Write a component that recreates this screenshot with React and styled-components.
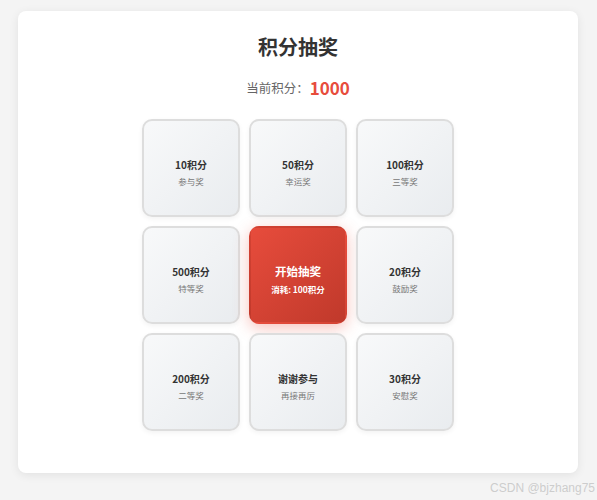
import React from "react";
import styled, { createGlobalStyle } from "styled-components";

const GlobalStyle = createGlobalStyle`
  html, body {
    margin: 0;
    padding: 0;
    background: #f4f4f4;
    font-family: "Noto Sans CJK SC", "Noto Sans", sans-serif;
  }
`;

const Page = styled.div`
  position: relative;
  height: 500px;
  padding: 11px 19px 0 18px;
  box-sizing: border-box;
`;

const Card = styled.div`
  background: #fff;
  border-radius: 8px;
  box-shadow: 0 2px 10px rgba(0, 0, 0, 0.08);
  padding: 22px 0 42px;
  display: flex;
  flex-direction: column;
  align-items: center;
`;

const Title = styled.h2`
  margin: 0;
  font-size: 20px;
  line-height: 28px;
  font-weight: 700;
  color: #333;
`;

const Points = styled.div`
  margin-top: 14px;
  height: 24px;
  display: flex;
  align-items: center;
  font-size: 12.5px;
  color: #666;
`;

const PointsValue = styled.span`
  font-size: 17px;
  font-weight: 700;
  color: #e74c3c;
  margin-left: 1px;
`;

const Grid = styled.div`
  margin-top: 20px;
  display: grid;
  grid-template-columns: repeat(3, 98px);
  grid-auto-rows: 98px;
  gap: 9px;
`;

const Cell = styled.div`
  box-sizing: border-box;
  border-radius: 10px;
  border: 2px solid ${(p) => (p.$start ? "transparent" : "#dddddd")};
  background: ${(p) =>
    p.$start
      ? "linear-gradient(135deg, #e74c3c 0%, #c0392b 100%)"
      : "linear-gradient(135deg, #f8f9fa 0%, #e9ecef 100%)"};
  box-shadow: ${(p) =>
    p.$start
      ? "0 4px 15px rgba(231, 76, 60, 0.35)"
      : "0 2px 5px rgba(0, 0, 0, 0.05)"};
  padding-top: 9px;
  display: flex;
  flex-direction: column;
  align-items: center;
  justify-content: center;
  gap: ${(p) => (p.$start ? "4px" : "3px")};
  color: ${(p) => (p.$start ? "#fff" : "#333")};
`;

const Name = styled.div`
  font-size: ${(p) => (p.$start ? "11.5px" : "10px")};
  font-weight: 700;
  line-height: ${(p) => (p.$start ? "15px" : "14px")};
`;

const Sub = styled.div`
  font-size: ${(p) => (p.$start ? "8.5px" : "8.5px")};
  line-height: 12px;
  color: ${(p) => (p.$start ? "#fff" : "#777")};
  font-weight: ${(p) => (p.$start ? 700 : 400)};
`;

const Watermark = styled.div`
  position: absolute;
  right: 2px;
  bottom: 5px;
  font-family: "Liberation Sans", sans-serif;
  font-size: 12px;
  color: rgba(200, 200, 200, 0.9);
`;

const prizes = [
  { name: "10积分", sub: "参与奖" },
  { name: "50积分", sub: "幸运奖" },
  { name: "100积分", sub: "三等奖" },
  { name: "500积分", sub: "特等奖" },
  { name: "开始抽奖", sub: "消耗: 100积分", start: true },
  { name: "20积分", sub: "鼓励奖" },
  { name: "200积分", sub: "二等奖" },
  { name: "谢谢参与", sub: "再接再厉" },
  { name: "30积分", sub: "安慰奖" },
];

export default function App() {
  return (
    <Page>
      <GlobalStyle />
      <Card>
        <Title>积分抽奖</Title>
        <Points>
          当前积分：<PointsValue>1000</PointsValue>
        </Points>
        <Grid>
          {prizes.map((p) => (
            <Cell key={p.name} $start={p.start}>
              <Name $start={p.start}>{p.name}</Name>
              <Sub $start={p.start}>{p.sub}</Sub>
            </Cell>
          ))}
        </Grid>
      </Card>
      <Watermark>CSDN @bjzhang75</Watermark>
    </Page>
  );
}
